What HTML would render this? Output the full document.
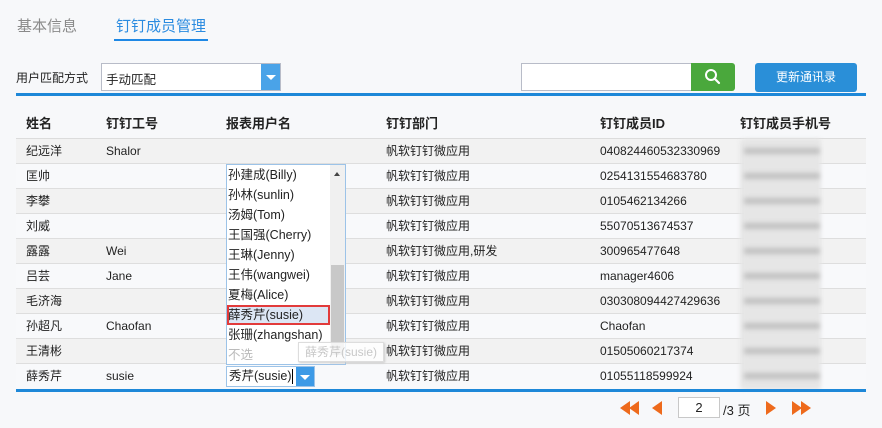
<!DOCTYPE html>
<html><head><meta charset="utf-8">
<style>
*{margin:0;padding:0;box-sizing:border-box}
body{width:882px;height:428px;background:#f7f8fa;font-family:"Liberation Sans","Noto Sans CJK SC",sans-serif;font-size:12px;color:#222;position:relative;overflow:hidden}
.a{position:absolute;white-space:nowrap}
.row{position:absolute;left:16px;width:850px;height:25px;border-bottom:1px solid #dedede}
.row span{position:absolute;top:0;height:24px;line-height:24px;white-space:nowrap}
.th{font-weight:bold;font-size:13px}
.dd div{height:20px;line-height:20px;padding-left:1px;font-size:12.5px}
</style></head><body>
<div class="a" style="left:17px;top:15px;font-size:15px;color:#8a8a8a">基本信息</div>
<div class="a" style="left:116px;top:15px;font-size:15px;color:#2a8be0">钉钉成员管理</div>
<div class="a" style="left:114px;top:39px;width:94px;height:2px;background:#1e88e5"></div>

<div class="a" style="left:16px;top:69px">用户匹配方式</div>
<div class="a" style="left:101px;top:63px;width:180px;height:28px;border:1px solid #b8bcc8;background:#fff"></div>
<div class="a" style="left:106px;top:69px;font-size:12.5px">手动匹配</div>
<div class="a" style="left:261px;top:64px;width:19px;height:26px;background:#4aa3e8"></div>
<div class="a" style="left:266px;top:75px;width:0;height:0;border-left:5px solid transparent;border-right:5px solid transparent;border-top:5px solid #fff"></div>

<div class="a" style="left:521px;top:63px;width:171px;height:28px;border:1px solid #b8bcc8;background:#fff"></div>
<div class="a" style="left:691px;top:63px;width:44px;height:28px;background:#4aa83c;border-radius:0 3px 3px 0"></div>
<svg class="a" style="left:704px;top:68px" width="18" height="18" viewBox="0 0 18 18"><circle cx="7" cy="7" r="5" fill="none" stroke="#fff" stroke-width="2"/><line x1="10.5" y1="10.5" x2="15" y2="15" stroke="#fff" stroke-width="2.2" stroke-linecap="round"/></svg>
<div class="a" style="left:755px;top:63px;width:102px;height:29px;background:#2a8fd8;border-radius:3px;color:#fff;text-align:center;line-height:29px">更新通讯录</div>

<div class="a" style="left:16px;top:93px;width:850px;height:3px;background:#1e88d8"></div>
<div class="row" style="top:96px;height:43px;border-bottom:1px solid #dcdcdc">
<span class="th" style="left:10px;top:16px">姓名</span><span class="th" style="left:90px;top:16px">钉钉工号</span><span class="th" style="left:210px;top:16px">报表用户名</span><span class="th" style="left:370px;top:16px">钉钉部门</span><span class="th" style="left:584px;top:16px">钉钉成员ID</span><span class="th" style="left:724px;top:16px">钉钉成员手机号</span>
</div>

<div class="row" style="top:139px;background:#f2f2f2"><span style="left:10px">纪远洋</span><span style="left:90px">Shalor</span><span style="left:370px">帆软钉钉微应用</span><span style="left:584px">040824460532330969</span></div>
<div class="row" style="top:164px;background:#f8f9fb"><span style="left:10px">匡帅</span><span style="left:370px">帆软钉钉微应用</span><span style="left:584px">0254131554683780</span></div>
<div class="row" style="top:189px;background:#f2f2f2"><span style="left:10px">李攀</span><span style="left:370px">帆软钉钉微应用</span><span style="left:584px">0105462134266</span></div>
<div class="row" style="top:214px;background:#f8f9fb"><span style="left:10px">刘威</span><span style="left:370px">帆软钉钉微应用</span><span style="left:584px">55070513674537</span></div>
<div class="row" style="top:239px;background:#f2f2f2"><span style="left:10px">露露</span><span style="left:90px">Wei</span><span style="left:370px">帆软钉钉微应用,研发</span><span style="left:584px">300965477648</span></div>
<div class="row" style="top:264px;background:#f8f9fb"><span style="left:10px">吕芸</span><span style="left:90px">Jane</span><span style="left:370px">帆软钉钉微应用</span><span style="left:584px">manager4606</span></div>
<div class="row" style="top:289px;background:#f2f2f2"><span style="left:10px">毛济海</span><span style="left:370px">帆软钉钉微应用</span><span style="left:584px">030308094427429636</span></div>
<div class="row" style="top:314px;background:#f8f9fb"><span style="left:10px">孙超凡</span><span style="left:90px">Chaofan</span><span style="left:370px">帆软钉钉微应用</span><span style="left:584px">Chaofan</span></div>
<div class="row" style="top:339px;background:#f2f2f2"><span style="left:10px">王清彬</span><span style="left:370px">帆软钉钉微应用</span><span style="left:584px">01505060217374</span></div>
<div class="row" style="top:364px;background:#f8f9fb;border-bottom:none"><span style="left:10px">薛秀芹</span><span style="left:90px">susie</span><span style="left:370px">帆软钉钉微应用</span><span style="left:584px">01055118599924</span></div>

<div class="a" style="left:740px;top:140px;width:80px;height:249px;background:#e6e6e6;filter:blur(2px)"></div>
<div class="a" style="left:744px;top:139px;width:76px;height:250px;background:repeating-linear-gradient(#e6e6e6 0,#e6e6e6 8px,#b8b8b8 10px,#b8b8b8 14px,#e6e6e6 16px,#e6e6e6 25px);filter:blur(2.5px);opacity:.8"></div>

<div class="a" style="left:16px;top:389px;width:850px;height:3px;background:#1e88d8"></div>

<!-- dropdown -->
<div class="a dd" style="left:226px;top:164px;width:120px;height:201px;background:#fff;border:1px solid #9cc3e8">
<div>孙建成(Billy)</div><div>孙林(sunlin)</div><div>汤姆(Tom)</div><div>王国强(Cherry)</div><div>王琳(Jenny)</div><div>王伟(wangwei)</div><div>夏梅(Alice)</div><div style="background:#dce6f4;outline:2px solid #e23b3b;outline-offset:-2px;width:103px">薛秀芹(susie)</div><div>张珊(zhangshan)</div><div style="color:#bbb">不选</div>
</div>
<div class="a" style="left:330px;top:165px;width:15px;height:199px;background:#f0f0f0"></div>
<div class="a" style="left:331px;top:265px;width:13px;height:90px;background:#c8c8c8"></div>
<div class="a" style="left:334px;top:172px;border-left:3.5px solid transparent;border-right:3.5px solid transparent;border-bottom:4px solid #444"></div>
<div class="a" style="left:334px;top:352px;border-left:3.5px solid transparent;border-right:3.5px solid transparent;border-top:4px solid #888"></div>
<div class="a" style="left:298px;top:342px;width:86px;height:20px;background:rgba(255,255,255,.8);border:1px solid #ddd;color:#c8c8c8;line-height:18px;padding-left:6px;box-shadow:1px 1px 2px #ccc">薛秀芹(susie)</div>

<div class="a" style="left:226px;top:366px;width:89px;height:21px;background:#fff;border:1px solid #9cc3e8"></div>
<div class="a" style="left:229px;top:366px;font-size:12.5px;line-height:21px">秀芹(susie)</div>
<div class="a" style="left:292px;top:369px;width:1px;height:15px;background:#000"></div>
<div class="a" style="left:296px;top:367px;width:18px;height:19px;background:#3d9ae6"></div>
<div class="a" style="left:300px;top:375px;border-left:5px solid transparent;border-right:5px solid transparent;border-top:5px solid #fff"></div>

<!-- pagination -->
<svg class="a" style="left:618px;top:400px" width="200" height="16" viewBox="0 0 200 16">
<polygon points="2,8 12,1 12,15" fill="#ee6a1c"/><polygon points="11,8 21,1 21,15" fill="#ee6a1c"/>
<polygon points="34,8 44,1 44,15" fill="#ee6a1c"/>
<polygon points="148,1 158,8 148,15" fill="#ee6a1c"/>
<polygon points="174,1 184,8 174,15" fill="#ee6a1c"/><polygon points="183,1 193,8 183,15" fill="#ee6a1c"/>
</svg>
<div class="a" style="left:678px;top:397px;width:42px;height:21px;background:#fff;border:1px solid #c8c8c8;text-align:center;line-height:19px;font-size:13px">2</div>
<div class="a" style="left:723px;top:400px;font-size:13px">/3 页</div>
</body></html>
